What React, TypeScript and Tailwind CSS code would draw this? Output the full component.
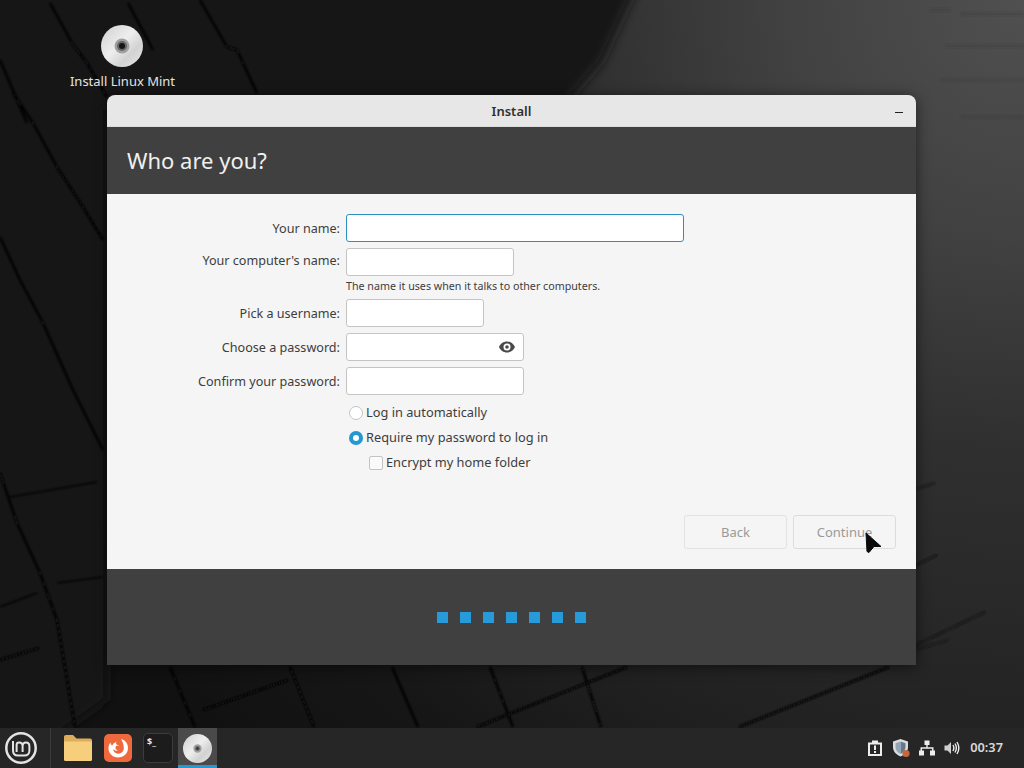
import React from "react";

const font = { fontFamily: '"Noto Sans", "Liberation Sans", sans-serif' };

function Wallpaper() {
  return (
    <svg className="absolute inset-0 h-full w-full" viewBox="0 0 1024 768" aria-hidden="true">
      <defs>
        <radialGradient id="wall" gradientUnits="userSpaceOnUse" cx="1024" cy="0" r="1100">
          <stop offset="0" stopColor="#505050" />
          <stop offset="0.22" stopColor="#414141" />
          <stop offset="0.4" stopColor="#303030" />
          <stop offset="0.7" stopColor="#212121" />
          <stop offset="0.85" stopColor="#161616" />
          <stop offset="1" stopColor="#111111" />
        </radialGradient>
        <filter id="soft"><feGaussianBlur stdDeviation="1.2" /></filter>
        <filter id="softer"><feGaussianBlur stdDeviation="6" /></filter>
      </defs>
      <rect width="1024" height="768" fill="url(#wall)" />
      <polygon points="-20,-20 640,-20 602,62 560,110 107,110 107,700 -20,790" fill="#131313" filter="url(#softer)" />
      <g stroke="#070707" strokeWidth="2.5" fill="none" filter="url(#soft)" strokeLinejoin="round">
        <path d="M50 3L72 43L87 63L107 97M128 3L153 50M200 0L227 47L237 50L257 93M0 60L27 123" />
        <path d="M13 93L33 123L57 167L83 207L103 240M0 237L20 280L43 323L73 390L103 450M0 473L17 523L40 573L57 620L75 727" />
        <path d="M170 667L195 727M290 667L314 727M392 667L418 727M490 667L513 727M582 667L601 727" />
        <path d="M203 710L288 680M477 727L627 667M739 727L889 667M0 660L39 648" />
        <path d="M10 497L97 482M57 583L103 577M0 607L37 593" strokeWidth="1.5" />
      </g>
      <g stroke="#141414" strokeWidth="1.5" fill="none" filter="url(#soft)">
        <path d="M916 489L935 483M916 565L937 555M916 645L985 612M915 650L948 640" />
      </g>
      <g stroke="#3a3a3a" strokeWidth="1.2" fill="none" filter="url(#soft)">
        <path d="M930 10H950M960 14H1024M945 46H1024M940 80H1024M960 117H1024" />
      </g>
    </svg>
  );
}

function Disc({ size, small }: { size: number; small?: boolean }) {
  return (
    <svg width={size} height={size} viewBox="0 0 42 42" aria-hidden="true">
      <defs>
        <linearGradient id={`disc${size}`} x1="0" y1="0" x2="1" y2="1">
          <stop offset="0" stopColor="#cfcfcf" />
          <stop offset="0.45" stopColor="#eeeeee" />
          <stop offset="0.7" stopColor="#d2d2d2" />
          <stop offset="1" stopColor="#e8e8e8" />
        </linearGradient>
      </defs>
      <circle cx="21" cy="21" r="21" fill={`url(#disc${size})`} />
      <circle cx="21" cy="21" r={small ? 6 : 7.5} fill="#a0a0a0" />
      <circle cx="21" cy="21" r={small ? 3.5 : 5} fill="#666666" />
      <circle cx="21" cy="21" r={small ? 1.8 : 3} fill={small ? "#333333" : "#161616"} />
    </svg>
  );
}

function MintLogo() {
  return (
    <svg width="32" height="32" viewBox="0 0 32 32" fill="none" stroke="#e4e4e4" aria-hidden="true">
      <circle cx="16" cy="16" r="14.7" strokeWidth="2.5" />
      <path d="M8 9V18.5C8 21.8 10.2 23.6 13 23.6H19.5C22.4 23.6 24.4 21.6 24.4 18.8V14.2C24.4 12 23 10.6 21 10.6C19 10.6 17.6 12 17.6 14.2V20M17.6 14.2C17.6 12 16.2 10.6 14.2 10.6C12.6 10.6 11.6 11.6 11.6 13V20" strokeWidth="2" />
    </svg>
  );
}

function FolderIcon() {
  return (
    <svg width="30" height="28" viewBox="0 0 30 28" aria-hidden="true">
      <path d="M1 3C1 1.8 1.8 1 3 1H10L13.5 4.5H27C28.2 4.5 29 5.3 29 6.5V9H1Z" fill="#dcae5c" />
      <path d="M1 7.5H29V25.5C29 26.5 28.2 27 27.4 27H2.6C1.8 27 1 26.5 1 25.5Z" fill="#f7cf7c" />
    </svg>
  );
}

function FirefoxIcon() {
  return (
    <svg width="28" height="28" viewBox="0 0 28 28" aria-hidden="true">
      <rect width="28" height="28" rx="5" fill="#ee6a3c" />
      <path d="M17 5C21.5 6 24 9.8 24 14C24 19.5 19.6 23.5 14 23.5C8.6 23.5 4.5 19.5 4.5 14.3C4.5 12 5.3 10 6.5 8.6C6.6 10 7.2 11 8.2 11.7C8.8 9.6 10.6 8.3 12.6 8C11.6 9.2 11.9 10.3 13 10.7C15.8 11.4 16.5 13.8 14.6 15.8C12.5 17.4 10 16.5 9 14.8C9.2 18 11.7 20 14.6 19.7C18 19.4 20 16.8 19.8 13.8C19.6 10.5 18.6 7.5 17 5Z" fill="#ffffff" />
      <circle cx="13.8" cy="13.8" r="2.4" fill="#ee6a3c" />
    </svg>
  );
}

function TerminalIcon() {
  return (
    <div className="flex h-[30px] w-[30px] items-start rounded-[5px] border border-[#3c3c3c] bg-[#1c1c1c] pl-[3px] text-[9px] leading-[15px] font-bold text-[#e8e8e8]">
      $_
    </div>
  );
}

function TrayIcons() {
  return (
    <div className="flex items-center gap-[9px]">
      <svg width="16" height="18" viewBox="0 0 16 18" fill="#ededed" aria-hidden="true">
        <path fillRule="evenodd" d="M5 1.5H11V3.5H15V17H1V3.5H5ZM3 5.5V15H13V5.5ZM7 6.5H9V11H7ZM7 12H9V14H7Z" />
      </svg>
      <svg width="18" height="20" viewBox="0 0 18 20" aria-hidden="true">
        <path d="M8.5 1L16 3.5V9C16 13.5 13 16.6 8.5 18.5C4 16.6 1 13.5 1 9V3.5Z" fill="#d7dde2" />
        <path d="M8.5 3.5L13.5 5.2V9C13.5 12.2 11.5 14.5 8.5 16Z" fill="#66798a" />
        <path d="M8.5 3.5L3.5 5.2V9C3.5 12.2 5.5 14.5 8.5 16Z" fill="#93a5b5" />
        <circle cx="14" cy="15.5" r="3.6" fill="#c8683a" />
      </svg>
      <svg width="16" height="16" viewBox="0 0 16 16" fill="#ededed" aria-hidden="true">
        <path d="M5.5 0.5H10.5V5H8.7V7.2H14.5V10.5H16V15.5H11V10.5H13V8.8H3V10.5H5V15.5H0V10.5H1.5V7.2H7.3V5H5.5Z" />
      </svg>
      <svg width="16" height="16" viewBox="0 0 16 16" aria-hidden="true">
        <path d="M0.5 5.5H3.5L7 2V14L3.5 10.5H0.5Z" fill="#cfcfcf" />
        <path d="M9 5C10 6.8 10 9.2 9 11M11 3.5C12.6 6.2 12.6 9.8 11 12.5M13 2C15.2 5.6 15.2 10.4 13 14" stroke="#ededed" strokeWidth="1.4" fill="none" />
      </svg>
    </div>
  );
}

function Taskbar() {
  return (
    <div className="relative z-10 flex h-10 items-stretch bg-[#262626] text-[#dcdcdc]">
      <div className="flex w-[51px] items-center justify-center border-r border-[#3a3a3a] pr-[9px]">
        <MintLogo />
      </div>
      <div className="ml-[7px] flex items-stretch">
        <div className="flex w-[40px] items-center justify-center"><FolderIcon /></div>
        <div className="flex w-[40px] items-center justify-center"><FirefoxIcon /></div>
        <div className="flex w-[40px] items-center justify-center"><TerminalIcon /></div>
        <div className="flex w-[39px] items-center justify-center border-b-[3px] border-[#2597d4] bg-[#4a4a4a] pt-[3px]"><Disc size={29} small /></div>
      </div>
      <div className="ml-auto flex items-center gap-[9px] pr-[21px]">
        <div className="-translate-x-px"><TrayIcons /></div>
        <span className="text-[12.8px] font-semibold text-[#d8d8d8]">00:37</span>
      </div>
    </div>
  );
}

function Field({ label, width, eye, focused, raised }: { label: string; width: string; eye?: boolean; focused?: boolean; raised?: boolean }) {
  return (
    <div className="flex h-7 items-center">
      <label className={`w-[239px] pr-[6px] text-right text-[12.6px] text-[#3d3d3d] ${raised ? "pb-px" : "pt-[2px]"}`}>{label}</label>
      <div className={`flex h-7 items-center justify-end rounded-[3px] border bg-white pr-[8px] ${width} ${focused ? "border-[#2d8fbf]" : "border-[#c4c4c4]"}`}>
        {eye && (
          <svg width="16" height="12" viewBox="0 0 16 12" aria-hidden="true">
            <path fillRule="evenodd" d="M8 0.5C11.6 0.5 14.6 2.7 16 6C14.6 9.3 11.6 11.5 8 11.5C4.4 11.5 1.4 9.3 0 6C1.4 2.7 4.4 0.5 8 0.5ZM8 2.5A3.5 3.5 0 1 0 8 9.5A3.5 3.5 0 1 0 8 2.5ZM8 4.2A1.8 1.8 0 1 1 8 7.8A1.8 1.8 0 1 1 8 4.2Z" fill="#4a4a4a" />
          </svg>
        )}
      </div>
    </div>
  );
}

function Window() {
  return (
    <div className="absolute top-[95px] left-[107px] flex h-[570px] w-[809px] flex-col overflow-hidden rounded-t-[8px] shadow-[0_2px_14px_rgba(0,0,0,0.55)]">
      <div className="relative flex h-8 items-center justify-center border-b border-[#dcdcdc] bg-[#e7e7e7] pt-[2px] text-[13px] font-semibold text-[#303030]">
        Install
        <span className="absolute top-[17px] right-[13px] h-px w-2 bg-[#222222]" />
      </div>
      <div className="flex h-[67px] items-center bg-[#404040] pl-5 text-[22px] text-[#f0f0f0]">Who are you?</div>
      <div className="flex h-[375px] flex-col bg-[#f5f5f5] pt-5">
        <Field label="Your name:" width="w-[338px]" focused />
        <div className="mt-[6px]"><Field label="Your computer's name:" width="w-[168px]" raised /></div>
        <div className="pl-[239px] text-[10.7px] leading-5 text-[#3d3d3d]">The name it uses when it talks to other computers.</div>
        <div className="mt-[3px]"><Field label="Pick a username:" width="w-[138px]" /></div>
        <div className="mt-[6px]"><Field label="Choose a password:" width="w-[178px]" eye /></div>
        <div className="mt-[6px]"><Field label="Confirm your password:" width="w-[178px]" /></div>
        <div className="mt-[5px] flex h-[25px] items-center pl-[242px] text-[12.8px] text-[#3d3d3d]">
          <span className="mr-[3px] h-[14px] w-[14px] rounded-full border border-[#c4c4c4] bg-white" />
          Log in automatically
        </div>
        <div className="flex h-[25px] items-center pl-[242px] text-[12.8px] text-[#3d3d3d]">
          <span className="mr-[3px] flex h-[14px] w-[14px] items-center justify-center rounded-full bg-[#2597d4]">
            <span className="h-[6px] w-[6px] rounded-full bg-white" />
          </span>
          Require my password to log in
        </div>
        <div className="flex h-[25px] items-center pl-[262px] text-[12.8px] text-[#3d3d3d]">
          <span className="mr-[3px] h-[14px] w-[14px] rounded-[2px] border border-[#c4c4c4] bg-[#fafafa]" />
          Encrypt my home folder
        </div>
        <div className="mt-auto mb-5 flex justify-end gap-[6px] pr-5">
          <div className="flex h-[34px] w-[103px] items-center justify-center rounded-[3px] border border-[#e2e2e2] pt-px text-[13px] text-[#9a9a9a]">Back</div>
          <div className="flex h-[34px] w-[103px] items-center justify-center rounded-[3px] border border-[#dcdcdc] pt-px text-[13px] text-[#9a9a9a]">Continue</div>
        </div>
      </div>
      <div className="flex flex-1 justify-center gap-[12px] bg-[#404040] pt-[43px]">
        {[0, 1, 2, 3, 4, 5, 6].map((i) => (
          <span key={i} className="h-[11px] w-[11px] bg-[#279bd9]" />
        ))}
      </div>
    </div>
  );
}

export default function App() {
  return (
    <div className="relative flex h-[768px] w-[1024px] flex-col overflow-hidden" style={font}>
      <Wallpaper />
      <div className="relative flex-1">
        <div className="absolute top-[25px] left-[60px] flex w-[125px] flex-col items-center gap-[6px] text-[13px] text-[#e4e4e4]">
          <div className="-translate-x-px"><Disc size={42} /></div>
          <span className="leading-[16px]">Install Linux Mint</span>
        </div>
        <Window />
        <svg className="absolute top-[532px] left-[865px]" width="17" height="22" viewBox="0 0 17 22" aria-hidden="true">
          <path d="M1 1L16 14.5L9 14.5L4 20.5L2 19.5Z" fill="#0a0a0a" stroke="#0a0a0a" strokeWidth="1" />
        </svg>
      </div>
      <Taskbar />
    </div>
  );
}
